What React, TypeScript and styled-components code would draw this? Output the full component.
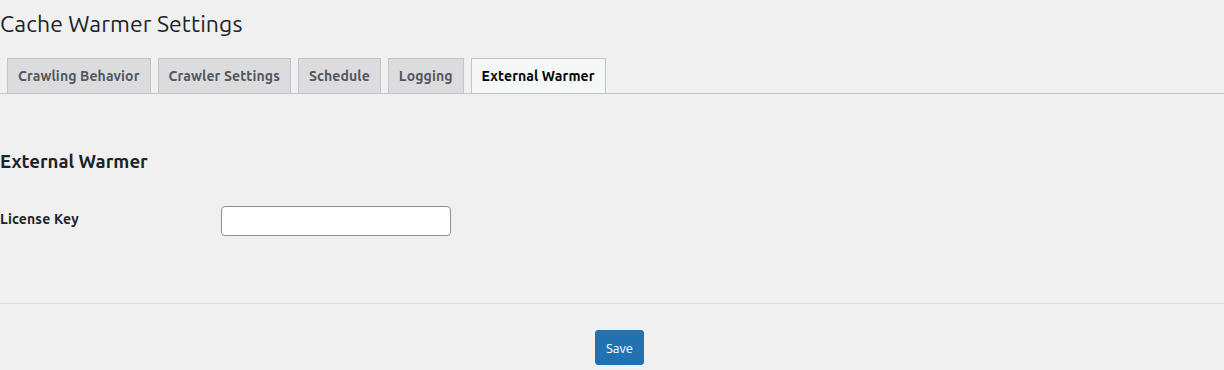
import React from "react";
import styled, { createGlobalStyle } from "styled-components";

const Global = createGlobalStyle`
  html, body { margin: 0; padding: 0; }
  body {
    background: #f0f0f1;
    color: #1d2327;
    font-family: "Ubuntu", "Liberation Sans", Arial, sans-serif;
    font-size: 13px;
    width: 1224px;
    height: 370px;
    overflow: hidden;
  }
`;

const Wrap = styled.div`
  display: flex;
  flex-direction: column;
`;

const Title = styled.h1`
  margin: 0;
  padding: 9px 0 0;
  font-size: 23px;
  font-weight: 400;
  line-height: 30px;
  color: #1d2327;
  height: 58px;
  box-sizing: border-box;
  letter-spacing: 0.1px;
`;

const TabBar = styled.nav`
  display: flex;
  align-items: flex-end;
  border-bottom: 1px solid #c3c4c7;
`;

const Tab = styled.a<{ $active?: boolean }>`
  margin-left: 7px;
  margin-bottom: -1px;
  padding: 5px 10px;
  border: 1px solid #c3c4c7;
  background: ${(p) => (p.$active ? "#f6f7f7" : "#dcdcde")};
  color: ${(p) => (p.$active ? "#000" : "#50575e")};
  font-size: 14px;
  font-weight: 600;
  line-height: 24px;
  letter-spacing: 0.12px;
  text-decoration: none;
  white-space: nowrap;
`;

const Section = styled.div`
  padding-top: 56px;
`;

const SectionTitle = styled.h2`
  margin: 0;
  font-size: 18.6px;
  font-weight: 700;
  line-height: 24px;
  color: #1d2327;
`;

const FieldRow = styled.div`
  display: grid;
  grid-template-columns: 221px 230px;
  align-items: start;
  margin-top: 32px;
`;

const Label = styled.label`
  font-size: 14px;
  font-weight: 700;
  line-height: 20px;
  letter-spacing: 0.18px;
  padding-top: 3px;
  color: #1d2327;
`;

const Input = styled.input`
  box-sizing: border-box;
  width: 230px;
  height: 30px;
  border: 1px solid #8c8f94;
  border-radius: 4px;
  background: #fff;
  padding: 0 8px;
  font-size: 14px;
  font-family: inherit;
  outline: none;
`;

const Divider = styled.hr`
  margin: 67px 0 0;
  border: 0;
  border-top: 1px solid #dcdcde;
  height: 0;
`;

const Footer = styled.div`
  display: flex;
  justify-content: center;
  padding-left: 15px;
  padding-top: 26px;
`;

const SaveButton = styled.button`
  height: 35px;
  padding: 0 10px;
  background: #2271b1;
  border: 1px solid #2271b1;
  border-radius: 3px;
  color: #fff;
  font-family: inherit;
  font-size: 13px;
  cursor: pointer;
`;

export default function App() {
  const tabs = ["Crawling Behavior", "Crawler Settings", "Schedule", "Logging", "External Warmer"];
  return (
    <>
      <Global />
      <Wrap>
        <Title>Cache Warmer Settings</Title>
        <TabBar>
          {tabs.map((t) => (
            <Tab key={t} href="#" $active={t === "External Warmer"}>
              {t}
            </Tab>
          ))}
        </TabBar>
        <Section>
          <SectionTitle>External Warmer</SectionTitle>
          <FieldRow>
            <Label htmlFor="license">License Key</Label>
            <Input id="license" type="text" />
          </FieldRow>
        </Section>
        <Divider />
        <Footer>
          <SaveButton>Save</SaveButton>
        </Footer>
      </Wrap>
    </>
  );
}
